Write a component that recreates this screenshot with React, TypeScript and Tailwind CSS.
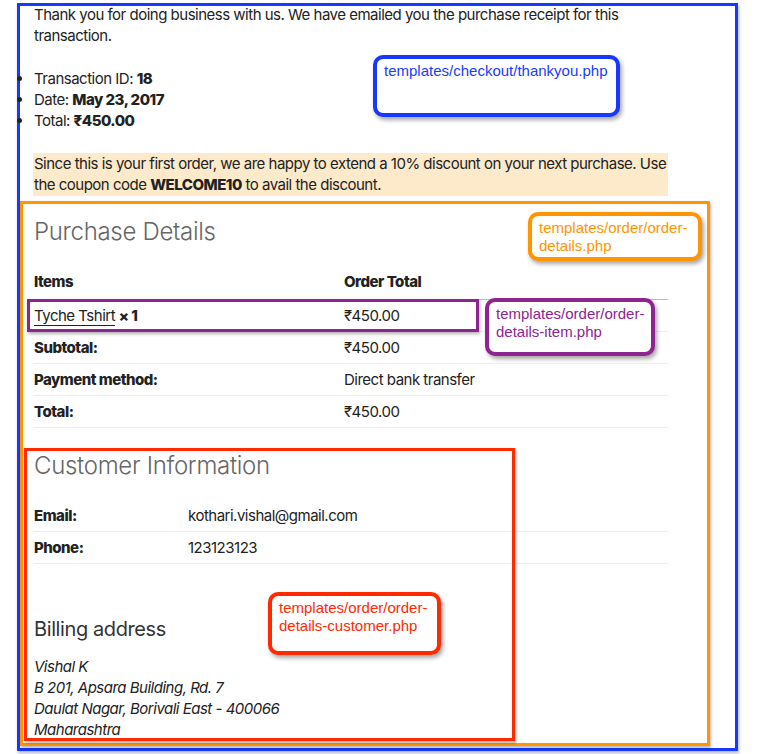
import React from "react";

const purchaseRows = [
  { label: "Subtotal:", value: "₹450.00" },
  { label: "Payment method:", value: "Direct bank transfer" },
  { label: "Total:", value: "₹450.00" },
];

const customerRows = [
  { label: "Email:", value: "kothari.vishal@gmail.com" },
  { label: "Phone:", value: "123123123" },
];

const address = [
  "Vishal K",
  "B 201, Apsara Building, Rd. 7",
  "Daulat Nagar, Borivali East - 400066",
  "Maharashtra",
];

function Callout({
  className,
  lines,
}: {
  className: string;
  lines: string[];
}) {
  return (
    <div
      className={`absolute rounded-[10px] border-4 bg-white px-[7px] pt-[3px] font-['Liberation_Sans',Arial,sans-serif] text-[15px] leading-[18px] tracking-normal shadow-[2px_3px_4px_rgba(0,0,0,0.35)] ${className}`}
    >
      {lines.map((line) => (
        <span key={line} className="block whitespace-nowrap">
          {line}
        </span>
      ))}
    </div>
  );
}

export default function App() {
  return (
    <div className="relative h-[754px] w-[763px] overflow-hidden bg-white font-['Inter','Noto_Sans',sans-serif] text-[15px] leading-[21px] tracking-[-0.5px] text-[#222]">
      {/* thankyou.php frame */}
      <div className="ml-[17px] mt-[3px] h-[748px] w-[721px] border-[3px] border-[#1638ff] shadow-[1px_2px_3px_rgba(0,0,0,0.3)]">
        <div className="-mt-[2px] pl-[14px]">
          <p className="w-[640px]">
            Thank you for doing business with us. We have emailed you the
            purchase receipt for this transaction.
          </p>

          <ul className="mt-[22px] list-disc">
            <li>
              Transaction ID: <strong className="font-extrabold">18</strong>
            </li>
            <li>
              Date: <strong className="font-extrabold">May 23, 2017</strong>
            </li>
            <li>
              Total: <strong className="font-extrabold">₹450.00</strong>
            </li>
          </ul>

          <p className="-ml-px mt-[22px] w-[635px] bg-[#fdeacb] pb-px pl-px">
            Since this is your first order, we are happy to extend a 10%
            discount on your next purchase. Use the coupon code{" "}
            <strong className="font-extrabold">WELCOME10</strong> to avail the
            discount.
          </p>
        </div>

        {/* order-details.php frame */}
        <div className="mt-[5px] h-[545px] w-[690px] border-[3px] border-[#ff9500] shadow-[1px_2px_3px_rgba(0,0,0,0.3)]">
          <div className="w-[645px] pl-[11px]">
            <h2 className="mt-[12px] text-[24px] font-light leading-[32px] tracking-[-0.3px] text-[#666]">
              Purchase Details
            </h2>

            <div className="mt-[16px]">
              <div className="grid h-[36px] grid-cols-[310px_1fr] items-center border-b border-[#bbb] font-extrabold">
                <span>Items</span>
                <span>Order Total</span>
              </div>
              <div className="grid h-[32px] grid-cols-[310px_1fr] items-center border-b border-[#eee]">
                <span>
                  <span className="border-b border-[#222]">Tyche Tshirt</span>{" "}
                  <strong className="font-extrabold">× 1</strong>
                </span>
                <span>₹450.00</span>
              </div>
              {purchaseRows.map(({ label, value }) => (
                <div
                  key={label}
                  className="grid h-[32px] grid-cols-[310px_1fr] items-center border-b border-[#eee]"
                >
                  <span className="font-extrabold">{label}</span>
                  <span>{value}</span>
                </div>
              ))}
            </div>

            <h2 className="mt-[22px] text-[24px] font-light leading-[32px] tracking-[-0.3px] text-[#666]">
              Customer Information
            </h2>

            <div className="mt-[18px]">
              {customerRows.map(({ label, value }) => (
                <div
                  key={label}
                  className="grid h-[32px] grid-cols-[154px_1fr] items-center border-b border-[#eee]"
                >
                  <span className="font-extrabold">{label}</span>
                  <span>{value}</span>
                </div>
              ))}
            </div>

            <h3 className="mt-[51px] text-[20px] leading-[28px] tracking-[-0.4px] text-[#333]">
              Billing address
            </h3>

            <address className="mt-[13px] italic">
              {address.map((line) => (
                <span key={line} className="block">
                  {line}
                </span>
              ))}
            </address>
          </div>
        </div>
      </div>

      {/* annotation overlays */}
      <div className="absolute left-[27px] top-[299px] h-[33px] w-[452px] border-[3px] border-[#8e2490] shadow-[1px_2px_3px_rgba(0,0,0,0.3)]" />
      <div className="absolute left-[24px] top-[448px] h-[293px] w-[491px] border-[3px] border-[#ff2a00] shadow-[1px_2px_3px_rgba(0,0,0,0.3)]" />

      <Callout
        className="left-[373px] top-[55px] h-[62px] w-[247px] border-[#1638ff] text-[#1a3cff]"
        lines={["templates/checkout/thankyou.php"]}
      />
      <Callout
        className="left-[528px] top-[212px] h-[49px] w-[174px] border-[#ff9500] text-[#ff9500]"
        lines={["templates/order/order-", "details.php"]}
      />
      <Callout
        className="left-[485px] top-[298px] h-[58px] w-[170px] border-[#8e2490] text-[#8e2490]"
        lines={["templates/order/order-", "details-item.php"]}
      />
      <Callout
        className="left-[268px] top-[592px] h-[63px] w-[173px] border-[#ff2a00] text-[#ff2a00]"
        lines={["templates/order/order-", "details-customer.php"]}
      />
    </div>
  );
}
